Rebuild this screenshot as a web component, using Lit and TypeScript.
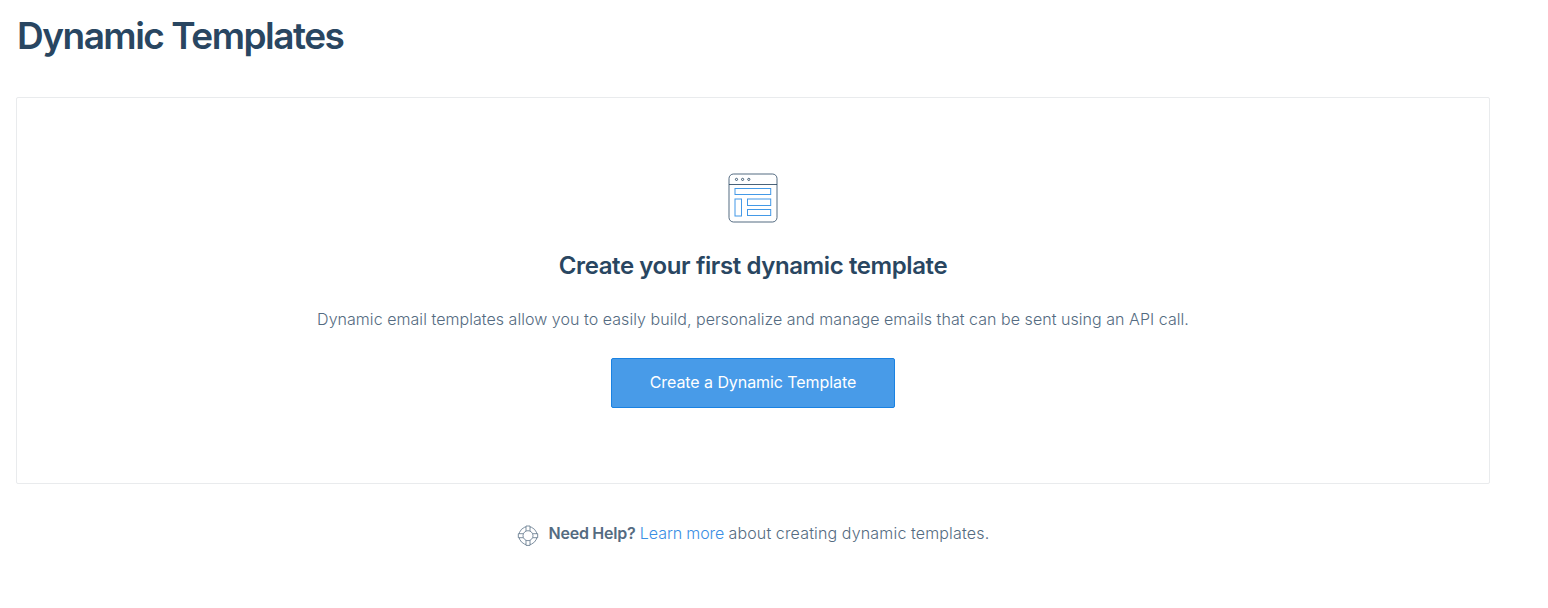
import { LitElement, html, css } from "lit";
import { customElement } from "lit/decorators.js";

@customElement("app-root")
export class AppRoot extends LitElement {
  static styles = css`
    :host {
      display: block;
      box-sizing: border-box;
      min-height: 608px;
      padding: 12px 58px 0 16px;
      background: #fff;
      color: #546b81;
      font-family: Inter, Roboto, "Liberation Sans", sans-serif;
      font-size: 16px;
      line-height: 24px;
    }
    h1, h2, p { margin: 0; white-space: nowrap; }
    .title {
      padding-left: 1px;
      color: #294661;
      font-size: 37px;
      font-weight: 600;
      line-height: 48px;
      letter-spacing: -1.5px;
    }
    .card {
      display: flex;
      flex-direction: column;
      align-items: center;
      box-sizing: border-box;
      height: 387px;
      margin-top: 37px;
      padding-top: 75px;
      border: 1px solid #e9ebed;
      border-radius: 2px;
    }
    .art { display: block; }
    .heading {
      margin-top: 25px;
      color: #294661;
      font-size: 24px;
      font-weight: 600;
      line-height: 36px;
      letter-spacing: -0.4px;
    }
    .copy {
      margin-top: 23px;
      font-weight: 300;
      letter-spacing: 0.045px;
    }
    .button {
      box-sizing: border-box;
      width: 284px;
      height: 50px;
      margin-top: 27px;
      padding: 0 0 2px;
      border: 1px solid #1a82e2;
      border-radius: 2px;
      background: #489be8;
      color: #fff;
      font: 400 16px/24px Inter, Roboto, sans-serif;
      letter-spacing: -0.07px;
    }
    .help {
      display: flex;
      justify-content: center;
      margin-top: 37px;
      font-weight: 300;
    }
    .ring { margin: 4px 10px 0 0; flex: none; }
    .text { word-spacing: -0.3px; }
    .strong { font-weight: 600; letter-spacing: -0.2px; }
    .link { color: #3a8ee4; text-decoration: none; letter-spacing: -0.06px; }
    .tail { letter-spacing: 0.18px; }
  `;

  render() {
    return html`
      <h1 class="title">Dynamic Templates</h1>
      <section class="card">
        <svg class="art" width="50" height="50" viewBox="0 0 50 50" fill="none">
          <g stroke="#294661" stroke-width="1">
            <rect x="1" y="1" width="48" height="48" rx="4.5" stroke-opacity=".8" />
            <path d="M1 11.5H49" stroke-opacity=".85" />
            <g stroke-opacity=".85">
              <circle cx="8.5" cy="6.4" r="1.1" /><circle cx="14.6" cy="6.4" r="1.1" /><circle cx="20.8" cy="6.4" r="1.1" />
            </g>
          </g>
          <g stroke="#1a82e2" stroke-width="1" stroke-opacity=".82">
            <rect x="7" y="15.5" width="35.7" height="6" />
            <rect x="7" y="26" width="6.5" height="17" />
            <rect x="19.5" y="26" width="23.2" height="6.5" />
            <rect x="19.5" y="36.5" width="23.2" height="6" />
          </g>
        </svg>
        <h2 class="heading">Create your first dynamic template</h2>
        <p class="copy">Dynamic email templates allow you to easily build, personalize and manage emails that can be sent using an API call.</p>
        <button class="button"><span class="label">Create a Dynamic Template</span></button>
      </section>
      <div class="help">
        <svg class="ring" width="22" height="22" viewBox="0 0 22 22" fill="none" stroke="#546b81" stroke-width=".75">
          <circle cx="11" cy="10.7" r="9.1" />
          <path fill="#fff" d="M9 6.2V1h4v5.2M9 15.2v5.2h4v-5.2M6.5 8.7H1.3v4h5.2M15.5 8.7h5.2v4h-5.2" />
          <circle cx="11" cy="10.7" r="5" fill="#fff" />
        </svg>
        <p class="text"><b class="strong">Need Help?</b> <a class="link" href="#">Learn more</a> <span class="tail">about creating dynamic templates.</span></p>
      </div>
    `;
  }
}
